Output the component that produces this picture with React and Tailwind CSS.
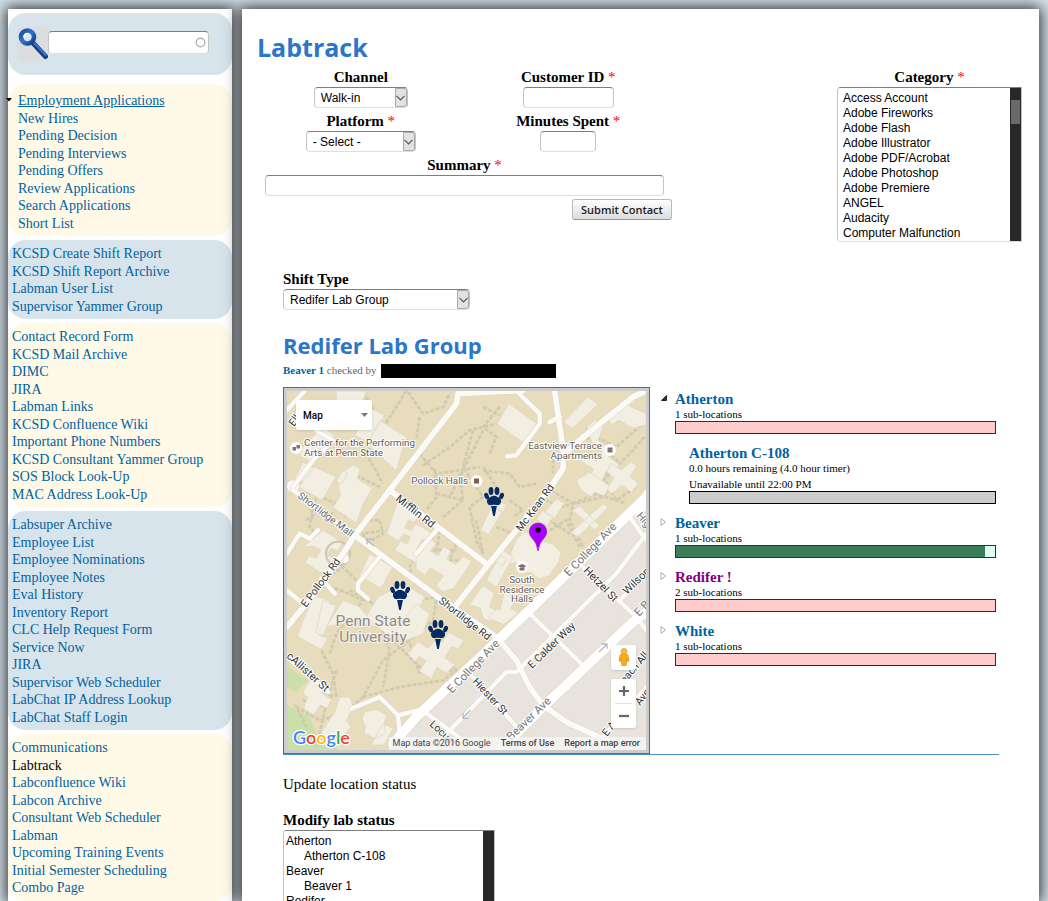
import React from "react";

const SERIF = "font-['Palatino_Linotype','Liberation_Serif',serif]";
const FIELD =
  "rounded-[4px] border border-[#c3c3c3] border-t-[#7d7d7d] border-b-[#dedede] bg-white font-['Liberation_Sans',sans-serif] text-[12px] text-black";

const menus = [
  {
    tone: "cream",
    items: [
      "Employment Applications", "New Hires", "Pending Decision", "Pending Interviews",
      "Pending Offers", "Review Applications", "Search Applications", "Short List",
    ],
    tree: true,
    height: "h-[140px]",
  },
  {
    tone: "blue",
    items: ["KCSD Create Shift Report", "KCSD Shift Report Archive", "Labman User List", "Supervisor Yammer Group"],
    height: "h-[70px]",
  },
  {
    tone: "cream",
    items: [
      "Contact Record Form", "KCSD Mail Archive", "DIMC", "JIRA", "Labman Links", "KCSD Confluence Wiki",
      "Important Phone Numbers", "KCSD Consultant Yammer Group", "SOS Block Look-Up", "MAC Address Look-Up",
    ],
    height: "h-[175px]",
  },
  {
    tone: "blue",
    items: [
      "Labsuper Archive", "Employee List", "Employee Nominations", "Employee Notes", "Eval History",
      "Inventory Report", "CLC Help Request Form", "Service Now", "JIRA", "Supervisor Web Scheduler",
      "LabChat IP Address Lookup", "LabChat Staff Login",
    ],
    height: "h-[210px]",
  },
  {
    tone: "cream",
    items: [
      "Communications", "Labtrack", "Labconfluence Wiki", "Labcon Archive", "Consultant Web Scheduler",
      "Labman", "Upcoming Training Events", "Initial Semester Scheduling", "Combo Page",
    ],
    current: "Labtrack",
    height: "h-[158px]",
    last: true,
  },
];

function MenuBlock({ menu }) {
  return (
    <nav
      className={`rounded-[18px] pr-1 pb-1 ${menu.tone === "blue" ? "bg-[#d8e4eb]" : "bg-[#fff9e8]"} ${
        menu.tree ? "pt-2 pl-[10px]" : "pt-[5px] pl-1"
      } ${menu.last ? "grow" : ""}`}
    >
      <ul className={`grid auto-rows-fr text-[14px] leading-[18px] ${menu.height}`}>
        {menu.items.map((item, i) => (
          <li key={item} className="relative whitespace-nowrap">
            {menu.tree && i === 0 && (
              <svg className="absolute top-[6px] -left-[12px] h-[4px] w-[6px]" viewBox="0 0 6 4" aria-hidden="true">
                <path d="M0 0h6L3 3.5z" fill="#000" />
              </svg>
            )}
            <a
              href="#"
              className={`${menu.current === item ? "text-black" : "text-[#0062a0]"} ${
                menu.tree && i === 0 ? "underline" : ""
              }`}
            >
              {item}
            </a>
          </li>
        ))}
      </ul>
    </nav>
  );
}

function SearchIcon() {
  return (
    <svg viewBox="0 0 31 34" className="h-[34px] w-[31px]" aria-hidden="true">
      <defs>
        <linearGradient id="lens" x1="0" y1="0" x2="1" y2="1">
          <stop offset="0" stopColor="#1b4fa0" />
          <stop offset="0.5" stopColor="#2c74cc" />
          <stop offset="1" stopColor="#123d86" />
        </linearGradient>
      </defs>
      <rect width="31" height="34" rx="3" fill="#dcdddf" />
      <path d="M16.5 16.5 28.500 29.500" stroke="#163f80" strokeWidth="5" strokeLinecap="round" />
      <path d="M17 16 28.500 28" stroke="#3672c4" strokeWidth="2.400" strokeLinecap="round" />
      <circle cx="10.5" cy="10" r="6.500" fill="#dbe7f1" stroke="url(#lens)" strokeWidth="4.600" />
      <path d="M7 10a4 4 0 0 1 3.500-3.500" stroke="#fff" strokeWidth="1.500" fill="none" />
    </svg>
  );
}

function Label({ htmlFor, required, children }) {
  return (
    <label htmlFor={htmlFor} className="block text-[15px] leading-5 font-bold whitespace-nowrap">
      {children}
      {required && <span className="font-normal text-[#f00]"> *</span>}
    </label>
  );
}

function Dropdown({ id, options, width }) {
  return (
    <div className={`relative h-[21px] ${width}`}>
      <select id={id} className={`block h-[21px] w-full appearance-none pl-[6px] ${FIELD}`}>
        {options.map((o) => (
          <option key={o}>{o}</option>
        ))}
      </select>
      <span className="pointer-events-none absolute inset-y-px right-px flex w-3 items-center justify-center rounded-r-[3px] border border-[#ababab] bg-[#e2e2e2]">
        <svg viewBox="0 0 9 6" className="h-[6px] w-[9px] shrink-0" aria-hidden="true">
          <path d="M.5.8 4.500 4.800 8.500.8" fill="none" stroke="#555" strokeWidth="1.200" />
        </svg>
      </span>
    </div>
  );
}

function ListBox({ id, options, size, indent, thumb }) {
  return (
    <div className={`flex overflow-hidden rounded-r-none ${FIELD}`}>
      <select
        id={id}
        size={size}
        className={`min-w-0 grow overflow-hidden bg-white pt-[3px] text-[12px] outline-none [scrollbar-width:none] ${
          indent ? "pl-[2px]" : "pl-[5px]"
        }`}
      >
        {options.map((o) => (
          <option
            key={o.text || o}
            className={`h-[15px] min-h-0 py-0 pr-0 leading-[15px] ${o.child ? "pl-[18px]" : "pl-0"}`}
          >
            {o.text || o}
          </option>
        ))}
      </select>
      <div className="w-[11px] bg-[#282828] px-px pt-3">{thumb && <div className="h-6 bg-[#686868]" />}</div>
    </div>
  );
}

/* Map geometry is in thirds of a pixel; labels and markers are in pixels. */
const footpaths = [
  "M240 15 290 100M370 12 250 200 300 290M180 20 150 90",
  "M375 15 420 80 480 60 500 20M410 90 400 160M410 200 460 260 590 240M420 235 500 180 560 130 640 110",
  "M570 130 540 240 600 330 560 360 580 460 600 500 580 400",
  "M455 245 460 330 430 370M460 320 540 340 530 260M480 390 540 340M600 250 680 260 710 300 760 290M600 240 640 300",
  "M650 60 600 120 640 150 620 200M600 60 650 85M810 200 810 260",
  "M640 420 690 440M680 340 720 370 690 390M600 130 500 330",
  "M790 300 870 350 860 400 900 480M770 330 830 360 960 330 1000 280M870 350 940 320 1030 350",
  "M840 200 880 160 940 150 1000 180 1080 110M910 120 960 180 970 270 1040 200 1085 150M960 180 1010 230",
  "M960 270 1000 340 1060 300M800 430 850 400 890 480M760 440 800 400 860 440",
  "M240 400 290 400 300 440 250 470 240 440 300 430M190 250 290 300M90 320 160 350 190 390M60 250 90 400",
  "M70 400 110 370 150 380M100 330 80 420 130 480",
  "M400 500 380 540 390 580M480 440 520 470 500 520 540 520M430 450 440 490 520 490M470 430 460 500",
  "M200 610 270 650 400 640 460 630 500 660M460 640 450 700 380 760 300 820 240 930",
  "M270 650 320 790 300 900M320 750 430 860M240 930 350 900 480 880 520 850M100 760 150 860 160 930",
  "M160 850 130 950 100 1080M380 770 410 860M140 800 160 740 240 640 150 600M30 700 60 650",
  "M500 830 540 870M240 930 180 980 110 1000 40 960 70 1020M560 860 500 850",
  "M60 940 130 960 150 920M220 580 180 540 150 560",
];

const buildings = [
  "M60 180l60-60 36 26-50 66-22 12-34-18z M60 225l40 22-20 44-44-16z",
  "M215 145l50-80 40 20-50 80zM250 170l40-70 80 50-30 100zM160 12h90l-30 80-60-30z",
  "M165 290l20-40 26-16 20 12-8 30 45 28-28 48 -20 56-70-46 22-36z",
  "M95 240l64 30-42 70-70-40z",
  "M60 480l60-50 58 36-14 26-20-8-12 20 20 12-26 50-60-40 14-20 20 8 14-26-22-10z",
  "M180 250l14 8-20 34-14-8z",
  "M345 340l66 42-18 24-16-8-12 24 20 10 14-22 50 30-14 24-18-8-16 30 20 10-18 34-68-40 18-28 20 10 10-22-22-10-14 22-36-22z",
  "M400 500l38-46 22 14-18 24 24 14 16-28 22 14-12 24 26 16 24-24 24 14-20 32-34 50-34 10-18-18 22-30-40-24-16 22-26-16z",
  "M678 50l92 66-44 54-84-60z",
  "M915 30l30 22-76 72-28-18z",
  "M910 120l26-20 24 20-14 40 24 20 8 30 30 22-10 24-26-6-26 50-30-24 16-30-40-24 14-20 34 20 16-30-30-30z",
  "M975 80l50-40 20 20 44 20v34l-40 10-40-24-26 14z",
  "M985 230l30 18 30-24 16 14-20 30 24 22-20 26-28-22-30 26-16-14 22-34-22-18z",
  "M880 280l40-24 60 40-16 30-30-10-10 14-30-20z",
  "M960 350l16 12-92 88-20-14zM870 370l20-14 60 60-16 12z",
  "M820 335l24 14-30 46-30-18zM780 370l30 20-18 26-32-18z",
  "M630 350l30 20-44 74-24-14z M640 340l30 14-8 22-30-12z",
  "M700 460l24-28 50 30 36 10 24 26-6 26-30 42-30 10-24-20-26 0-20-30-30 10z",
  "M660 490l30 20-50 90-30-20z M640 500l30 16-10 20-30-14z",
  "M600 595l34 24-14 40 26 16-10 28-34-6-10-34-32-10z",
  "M665 610l34 24-16 30 24 14-46 34-46-20 26-26 10 4z",
  "M260 500l70 40-36 64-64-38z",
  "M285 630l80-40 60 40-26 50 20 20-50 60-60-20-60-50z",
  "M400 650l40 30-20 60-50 20-40-20z",
  "M375 800l30-36 30 20 26-30 16 12 20-30 46 24-18 26-20-8-20 34 30 20-24 26-30-18-16 36-36-24 20-30-20-14-12 16z",
  "M60 700l34-76 50 20-36 100 26 10-20 34-70-40z",
  "M120 640l40 16-40 90-22-10zM180 640l50 20 50 60-60-20-90 20z",
  "M62 910l28-40 36 24-10 24 30 20-14 26-20-10-20 30-30-20 12-34-12-6z",
  "M170 930l30 0 10 30-20 40 14 20-40 44-50-26 40-60z",
  "M245 975l30-8 36 16-8 26 4 30-30 16-34-16 4-22-10-20zM300 1010l30 14-26 50h-40z",
];

const minorRoads = [
  "M65 12 12 70M100 130 150 160 90 220 30 300",
  "M30 310 215 445M12 500 50 440 80 455 105 430",
  "M12 610 60 650M290 510 225 590 225 610 255 635M115 575 155 620",
  "M700 12 770 80 770 110 700 205 672 208M830 90 800 105",
  "M460 430 400 500",
  "M205 965 290 930 345 985 425 965M345 985 350 1040 385 1090",
  "M12 810 135 915",
  "M1090 440 1000 560 700 855 670 855 540 990 440 1090M900 540 1060 690 1090 730",
  "M740 680 900 835M560 860 710 1030M425 975 540 1060M1010 640 1090 560",
  "M950 1060 1090 900M1090 460 1040 390",
];

const mainRoads = [
  "M720 10 525 20 520 50 320 310 215 445 180 500 70 650 12 720",
  "M320 310 610 530",
  "M215 445 465 630 640 750 700 820 740 900 780 955 850 1005 970 1060",
  "M815 12 842 200 840 245 810 290 700 430 610 540 515 660",
  "M1090 12 1050 30 950 110 848 195",
];

const avenues = "M1090 330 640 765 400 990 330 1070M1090 675 1050 705 780 960 650 1090";

const roadNames = [
  { t: "Shortlidge Mall", x: 297, y: 497, r: 37, s: 10, c: "#666" },
  { t: "Mifflin Rd", x: 395, y: 500, r: 38, s: 11 },
  { t: "Mc Kean Rd", x: 521, y: 532, r: -53, s: 10.5 },
  { t: "E Pollock Rd", x: 306, y: 608, r: -53, s: 10.5 },
  { t: "Ellow", x: 294, y: 427, r: -55, s: 10.5 },
  { t: "Shortlidge Rd", x: 438, y: 602, r: 38, s: 10.5 },
  { t: "E College Ave", x: 569, y: 577, r: -46, s: 11.5, c: "#777" },
  { t: "E College Ave", x: 452, y: 694, r: -46, s: 11.5, c: "#777" },
  { t: "Hetzel St", x: 583, y: 571, r: 46, s: 11 },
  { t: "Wilson", x: 627, y: 595, r: -44, s: 11 },
  { t: "E Calder Way", x: 532, y: 669, r: -44, s: 10.5 },
  { t: "Hiester St", x: 472, y: 682, r: 47, s: 10.5 },
  { t: "Beaver Ave", x: 511, y: 741, r: -44, s: 11.5, c: "#777" },
  { t: "Locust", x: 429, y: 725, r: 43, s: 10.5 },
  { t: "cAllister St", x: 286, y: 657, r: 42, s: 11 },
  { t: "High", x: 636, y: 516, r: 50, s: 10.5, c: "#777" },
  { t: "E B", x: 639, y: 617, r: -46, s: 11.5, c: "#777" },
  { t: "each All", x: 625, y: 684, r: -50, s: 10.5 },
  { t: "E Ave", x: 607, y: 737, r: -52, s: 10.5 },
  { t: "Ave", x: 640, y: 706, r: -52, s: 10.5 },
];

function Paw({ x, y }) {
  return (
    <g transform={`translate(${x} ${y})`} fill="#062a63">
      <ellipse cx="-7.400" cy="0" rx="2.200" ry="3.200" transform="rotate(-22 -7.400 0)" />
      <ellipse cx="-3" cy="-5" rx="2.400" ry="4" />
      <ellipse cx="3" cy="-5" rx="2.400" ry="4" />
      <ellipse cx="7.600" cy="0" rx="2.200" ry="3.200" transform="rotate(22 7.600 0)" />
      <path d="M-3.500 1Q0-1.500 3.500 1q4.500 1.800 3.400 5.500-1 3.200-4 2.500Q0 8.500-2.900 9q-3 .7-4-2.500Q-8 2.800-3.500 1z" />
      <path d="M-2.900 10h5.800L.8 20h-1.600z" />
    </g>
  );
}

function MapDrawing() {
  return (
    <svg viewBox="12 12 1077 1077" className="block w-full" role="img" aria-label="Campus map" fontFamily="Roboto, sans-serif">
      <rect x="12" y="12" width="1077" height="1077" fill="#e7dcbc" />
      <path d="M12 840 76 880 40 915 12 900zM12 955 80 990 100 1040 170 1090H12z" fill="#cbdfa8" />
      <path d="M1090 330 640 765 330 1089h760z" fill="#e8e4dd" />
      <g fill="none" stroke="#d1cab0" strokeWidth="8" strokeDasharray="12 5">
        {footpaths.map((d) => (
          <path key={d} d={d} />
        ))}
      </g>
      <g fill="#f2eee1" stroke="#ddd6c2" strokeWidth="2">
        {buildings.map((d) => (
          <path key={d} d={d} />
        ))}
      </g>
      <circle cx="165" cy="500" r="36" fill="none" stroke="#cfc8b6" strokeWidth="7" />
      <circle cx="185" cy="515" r="13" fill="#fbfaf7" />
      <circle cx="30" cy="298" r="18" fill="#fbfaf7" />
      <g fill="none" strokeLinejoin="round" strokeLinecap="round">
        <g stroke="#dcd5c2">
          <g strokeWidth="16">
            {minorRoads.map((d) => (
              <path key={d} d={d} />
            ))}
          </g>
          <g strokeWidth="20">
            {mainRoads.map((d) => (
              <path key={d} d={d} />
            ))}
          </g>
          <path d={avenues} strokeWidth="32" />
        </g>
        <g stroke="#fbfaf7">
          <g strokeWidth="13">
            {minorRoads.map((d) => (
              <path key={d} d={d} />
            ))}
          </g>
          <g strokeWidth="17">
            {mainRoads.map((d) => (
              <path key={d} d={d} />
            ))}
          </g>
          <path d={avenues} strokeWidth="29" stroke="#fff" />
        </g>
        <path d="M1090 305 1020 400 1040 390 1090 370z" fill="#fff" />
      </g>
      <g fill="none" stroke="#b4bacd" strokeWidth="4">
        <path d="M948 795l22-22m-14-2h16v14M274 478l-24-20m2 14v-16h16M562 970l-22 22m0-14v16h16" />
      </g>
      <g transform="scale(3) translate(-283 -387)">
        <g fill="#444" stroke="#fff" strokeWidth="2" strokeLinejoin="round" paintOrder="stroke">
          {roadNames.map((n) => (
            <text key={`${n.t}${n.x}`} transform={`translate(${n.x} ${n.y}) rotate(${n.r})`} fontSize={n.s} fill={n.c || "#333"}>
              {n.t}
            </text>
          ))}
        </g>
        <g fill="#fff">
          <circle cx="296" cy="448" r="6" />
          <circle cx="476.500" cy="481" r="6" />
          <circle cx="610" cy="450" r="6" />
          <circle cx="522" cy="567" r="6" />
        </g>
        <path d="M292.500 447h3.500v3.500h-3.500zM296.500 445h3.500v3.500h-3.500zM607.500 447.500h5v5h-5z" fill="#777" />
        <path d="M474 478.500h5v5h-5z" fill="#7c5d52" />
        <path d="M517.500 566l4.500-2 4.500 2-4.500 2zM519.500 568v2.500h5v-3.500z" fill="#8a6c62" />
        <g fill="#5f5b56" stroke="#fff" strokeWidth="2" paintOrder="stroke" strokeLinejoin="round" fontSize="9.800">
          <text x="304" y="446">Center for the Performing</text>
          <text x="304" y="456">Arts at Penn State</text>
          <text x="468" y="484" textAnchor="end">Pollock Halls</text>
          <text x="602" y="449" textAnchor="end">Eastview Terrace</text>
          <text x="602" y="459" textAnchor="end">Apartments</text>
          <g textAnchor="middle">
            <text x="522" y="583">South</text>
            <text x="522" y="593">Residence</text>
            <text x="522" y="602">Halls</text>
          </g>
        </g>
        <g fill="#8b8b8b" stroke="#f7f3e8" strokeWidth="2" paintOrder="stroke" fontSize="15.500" textAnchor="middle">
          <text x="373" y="626">Penn State</text>
          <text x="373" y="642">University</text>
        </g>
        <Paw x={494} y={496} />
        <Paw x={400} y={590} />
        <Paw x={438} y={629} />
        <path d="M538 551q-1-8-6-13a8.700 8.700 0 1 1 12 0q-5 5-6 13z" fill="#a800ff" stroke="#8500c8" strokeWidth="0.600" />
        <circle cx="538" cy="530" r="2.800" fill="#111" />
        <text x="293" y="744" fontSize="18" fontFamily="Lato, sans-serif" fontWeight="600" stroke="#fff" strokeWidth="2.500" paintOrder="stroke">
          <tspan fill="#4285f4">G</tspan>
          <tspan fill="#ea4335">o</tspan>
          <tspan fill="#fbbc05">o</tspan>
          <tspan fill="#4285f4">g</tspan>
          <tspan fill="#34a853">l</tspan>
          <tspan fill="#ea4335">e</tspan>
        </text>
      </g>
    </svg>
  );
}

function CampusMap() {
  return (
    <div className="relative w-[367px] shrink-0 border border-[#666] bg-[#ccc] p-[3px] font-['Roboto',sans-serif]">
      <MapDrawing />
      <button className="absolute top-3 left-3 flex h-[30px] w-[76px] items-center justify-between rounded-[2px] bg-white pr-1 pl-[7px] text-[10px] font-medium text-black shadow">
        Map
        <svg viewBox="0 0 7 4" className="h-1 w-[7px]" aria-hidden="true">
          <path d="M0 0h7L3.500 4z" fill="#777" />
        </svg>
      </button>
      <button aria-label="Street View" className="absolute right-[13px] bottom-[83px] flex size-[25px] items-center justify-center rounded-[2px] bg-white shadow">
        <svg viewBox="0 0 12 19" className="h-[19px] w-3" aria-hidden="true">
          <path d="M2 7q4-2 8 0l1 6-1.500.5L9 10l-.8 7.500H3.800L3 10l-.5 3.500L1 13z" fill="#f8ab1c" stroke="#d98c10" strokeWidth="0.600" />
          <circle cx="6" cy="3.500" r="3" fill="#fbbd3c" stroke="#d98c10" strokeWidth="0.600" />
        </svg>
      </button>
      <div className="absolute right-[13px] bottom-[25px] flex w-[25px] flex-col items-center rounded-[2px] bg-white shadow">
        <button aria-label="Zoom in" className="flex size-6 items-center justify-center">
          <svg viewBox="0 0 10 10" className="size-[10px]" aria-hidden="true">
            <path d="M5 0v10M0 5h10" stroke="#666" strokeWidth="2.200" />
          </svg>
        </button>
        <span className="h-px w-[17px] bg-[#e0e0e0]" />
        <button aria-label="Zoom out" className="flex size-6 items-center justify-center">
          <svg viewBox="0 0 10 10" className="size-[10px]" aria-hidden="true">
            <path d="M0 5h10" stroke="#666" strokeWidth="2.200" />
          </svg>
        </button>
      </div>
      <div className="absolute right-[3px] bottom-[3px] flex h-[13px] items-center gap-[10px] bg-[#f5f5f5]/80 pr-[6px] pl-1 text-[9px] leading-[13px] whitespace-nowrap text-[#444]">
        <span>Map data ©2016 Google</span>
        <a href="#" className="font-medium">Terms of Use</a>
        <a href="#" className="font-medium">Report a map error</a>
      </div>
    </div>
  );
}

const RED = "border-[#900] bg-[#fcc]";

function Place({ name, lines, bar, fill, state, visited, children }) {
  return (
    <li className="relative">
      {state && (
        <svg className="absolute top-[4px] -left-[15px] size-[8px]" viewBox="0 0 8 8" aria-hidden="true">
          {state === "open" ? (
            <path d="M6.500 1.500v5h-5z" fill="#333" stroke="#222" />
          ) : (
            <path d="M1 .5 5.500 4 1 7.500z" fill="#fff" stroke="#aaa" />
          )}
        </svg>
      )}
      <h3 className="text-[15px] leading-[18px] font-bold">
        <a href="#" className={visited ? "text-[#800080]" : "text-[#0062a0]"}>{name}</a>
      </h3>
      <div className="flex flex-col gap-[3px] text-[11px] leading-[13px]">
        {lines.map((l) => (
          <p key={l}>{l}</p>
        ))}
      </div>
      <div className={`h-[13px] border ${bar}`}>
        {fill && <div className="h-full bg-[#3a7d5a]" style={{ width: `${fill}%` }} />}
      </div>
      {children}
    </li>
  );
}

export default function App() {
  return (
    <div className={`flex h-screen gap-[10px] overflow-hidden bg-[#d6e2ea] pt-[9px] pr-[9px] pl-2 text-black ${SERIF}`}>
      <aside className="flex w-[224px] shrink-0 flex-col gap-1 bg-white pt-1 shadow-[0_0_14px_2px_#000c]">
        <form className="mb-[5px] flex h-[63px] items-center rounded-[18px] bg-[#d8e4eb] pl-[9px]">
          <button type="button" aria-label="Search">
            <SearchIcon />
          </button>
          <div className="relative -mt-1">
            <input aria-label="Search terms" className={`block h-[23px] w-[161px] pr-5 pl-1 ${FIELD}`} />
            <svg className="absolute top-[6px] right-[3px] size-[11px]" viewBox="0 0 11 11" aria-hidden="true">
              <circle cx="5.500" cy="5.500" r="4.300" fill="none" stroke="#b5b5b5" strokeWidth="1.500" />
            </svg>
          </div>
        </form>
        {menus.map((m, i) => (
          <MenuBlock key={i} menu={m} />
        ))}
      </aside>

      <main className="min-w-0 grow bg-white pt-[18px] pr-[17px] pl-[15px] shadow-[0_0_14px_2px_#000c]">
        <h1 className="font-['Open_Sans',sans-serif] text-[25px] leading-[40px] font-bold text-[#2b76ca]">Labtrack</h1>
        <form className="flex items-start justify-between">
          <div className="grid w-[415px] grid-cols-2 gap-y-[3px]">
            <div className="flex flex-col items-center">
              <Label htmlFor="channel">Channel</Label>
              <Dropdown id="channel" width="w-[94px]" options={["Walk-in", "Phone", "E-mail"]} />
            </div>
            <div className="flex flex-col items-center">
              <Label htmlFor="customer" required>Customer ID</Label>
              <input id="customer" className={`h-[21px] w-[91px] px-1 ${FIELD}`} />
            </div>
            <div className="flex flex-col items-center">
              <Label htmlFor="platform" required>Platform</Label>
              <Dropdown id="platform" width="w-[110px]" options={["- Select -", "Windows", "Mac"]} />
            </div>
            <div className="flex flex-col items-center">
              <Label htmlFor="minutes" required>Minutes Spent</Label>
              <input id="minutes" className={`h-[21px] w-[56px] px-1 ${FIELD}`} />
            </div>
            <div className="col-span-2 flex flex-col items-center">
              <Label htmlFor="summary" required>Summary</Label>
              <input id="summary" className={`h-[21px] w-[399px] px-1 ${FIELD}`} />
            </div>
            <button
              type="button"
              className="col-start-2 h-[21px] w-[100px] justify-self-end rounded-[3px] border border-[#b9b9b9] border-b-[#999] bg-linear-to-b from-white to-[#dcdcdc] font-['Open_Sans',sans-serif] text-[11px] leading-[19px] font-semibold whitespace-nowrap text-[#222]"
            >
              Submit Contact
            </button>
          </div>
          <div className="w-[185px]">
            <div className="flex justify-center">
              <Label htmlFor="category" required>Category</Label>
            </div>
            <ListBox
              id="category"
              size={10}
              thumb
              options={[
                "Access Account", "Adobe Fireworks", "Adobe Flash", "Adobe Illustrator", "Adobe PDF/Acrobat",
                "Adobe Photoshop", "Adobe Premiere", "ANGEL", "Audacity", "Computer Malfunction",
              ]}
            />
          </div>
        </form>

        <section className="mr-[23px] ml-[26px] pt-[27px]">
          <Label htmlFor="shift">Shift Type</Label>
          <Dropdown id="shift" width="w-[187px]" options={["Redifer Lab Group"]} />
          <h2 className="mt-[18px] font-['Open_Sans',sans-serif] text-[22px] leading-[34px] font-bold text-[#2b76ca]">
            Redifer Lab Group
          </h2>
          <p className="mt-px flex h-[15px] items-center gap-1 text-[11px] leading-[15px] text-[#666]">
            <span>
              <a href="#" className="font-bold text-[#0062a0]">Beaver 1</a> checked by
            </span>
            <span className="h-[14px] w-[175px] bg-black" />
          </p>
          <div className="mt-[9px] flex gap-[25px] border-b border-[#4a94c0]">
            <CampusMap />
            <ul className="flex min-w-0 grow flex-col gap-[10px] pt-[3px] pr-[3px]">
              <Place name="Atherton" state="open" lines={["1 sub-locations"]} bar={RED}>
                <ul className="pt-[10px] pl-[14px]">
                  <Place
                    name="Atherton C-108"
                    lines={["0.0 hours remaining (4.0 hour timer)", "Unavailable until 22:00 PM"]}
                    bar="border-black bg-[#ccc]"
                  />
                </ul>
              </Place>
              <Place name="Beaver" state="closed" lines={["1 sub-locations"]} bar="border-[#004c1c] bg-[#dfe]" fill={97} />
              <Place name="Redifer !" state="closed" visited lines={["2 sub-locations"]} bar={RED} />
              <Place name="White" state="closed" lines={["1 sub-locations"]} bar={RED} />
            </ul>
          </div>
          <p className="mt-[19px] mb-4 text-[15px] leading-5">Update location status</p>
          <Label htmlFor="lab-status">Modify lab status</Label>
          <div className="w-[212px]">
            <ListBox
              id="lab-status"
              size={10}
              indent
              options={[
                { text: "Atherton" }, { text: "Atherton C-108", child: true }, { text: "Beaver" },
                { text: "Beaver 1", child: true }, { text: "Redifer" }, { text: "White" },
              ]}
            />
          </div>
        </section>
      </main>
    </div>
  );
}
